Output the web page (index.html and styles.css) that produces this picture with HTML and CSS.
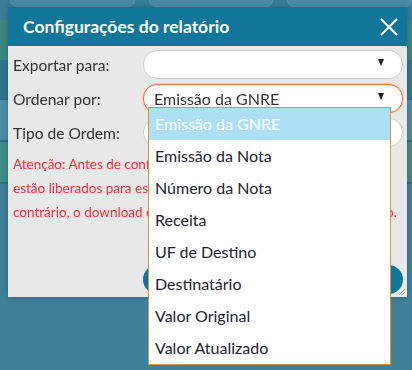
FILE: index.html
```html
<!DOCTYPE html>
<html lang="pt-BR">
<head>
  <meta charset="UTF-8" />
  <meta name="viewport" content="width=device-width, initial-scale=1.0"/>
  <title>Relatório GNRE</title>
  <link rel="stylesheet" href="styles.css">
</head>
<body>
  <!-- Page behind the modal -->
  <div class="page">
    <div class="top-tabs">
      <div class="top-tab"></div>
      <div class="top-tab"></div>
      <div class="top-tab"></div>
    </div>
    <div class="page-band green"></div>
    <div class="page-band dark"></div>
    <div class="page-band line"></div>
    <div class="page-band lighter"></div>
    <div class="page-band line"></div>
    <div class="page-band green2"></div>
    <div class="page-band line"></div>
  </div>

  <!-- Modal -->
  <div class="modal">
    <div class="modal-header">
      <h2>Configurações do relatório</h2>
      <button class="close-btn" aria-label="Fechar">
        <svg width="18" height="18" viewBox="0 0 18 18"><path d="M1 1 L17 17 M17 1 L1 17" stroke="#fff" stroke-width="2" fill="none"/></svg>
      </button>
    </div>
    <div class="modal-body">
      <div class="form-row">
        <label>Exportar para:</label>
        <div class="select-box"><span></span><i class="arrow"></i></div>
      </div>
      <div class="form-row">
        <label>Ordenar por:</label>
        <div class="select-box focused">
          <span>Emissão da GNRE</span><i class="arrow"></i>
          <ul class="dropdown">
            <li class="selected">Emissão da GNRE</li>
            <li>Emissão da Nota</li>
            <li>Número da Nota</li>
            <li>Receita</li>
            <li>UF de Destino</li>
            <li>Destinatário</li>
            <li>Valor Original</li>
            <li>Valor Atualizado</li>
          </ul>
        </div>
      </div>
      <div class="form-row">
        <label>Tipo de Ordem:</label>
        <div class="select-box"><span>Crescente</span><i class="arrow"></i></div>
      </div>
      <p class="warning">Atenção: Antes de confirmar, verifique se os filtros selecionados estão liberados para esse tipo de relatório e exportação. Caso contrário, o download dos dados não será realizado com sucesso.</p>
      <div class="actions">
        <button class="confirm-btn">Gerar Relatório</button>
      </div>
      <svg class="grip" width="8" height="8" viewBox="0 0 8 8"><path d="M7 1 L1 7 M7 4 L4 7" stroke="#b8b8b8" stroke-width="1" fill="none"/></svg>
    </div>
  </div>
</body>
</html>
```
FILE: styles.css
```css
* { box-sizing: border-box; }
body {
  margin: 0;
  font-family: Lato, 'Open Sans', sans-serif;
  background: #3f819b;
  height: 370px;
  overflow: hidden;
}
.page {
  height: 370px;
}
.top-tabs {
  display: flex;
  gap: 14px;
  padding: 0 0 0 10px;
  height: 20px;
  background: #3a7d97;
}
.top-tab {
  width: 143px;
  height: 7px;
  background: #4a8aa6;
  border: 1px solid #5a95ad;
  border-top: none;
  border-radius: 0 0 8px 8px;
}
.page-band { height: 40px; }
.page-band.green { background: #3d8783; }
.page-band.dark { height: 38px; background: #2f7592; }
.page-band.line { height: 2px; background: #2e6f89; }
.page-band.lighter { height: 40px; background: #4b8ca6; }
.page-band.green2 { height: 40px; background: #3f8d87; }

.modal {
  position: fixed;
  top: 7px;
  left: 8px;
  width: 399px;
  height: 290px;
  background: #e8e8e8;
  box-shadow: 0 0 6px rgba(0,0,0,0.25);
}
.modal-header {
  height: 39px;
  background: #11769a;
  display: flex;
  align-items: center;
  justify-content: space-between;
  padding: 0 9px 0 15px;
}
.modal-header h2 {
  margin: 0;
  color: white;
  font-size: 17.5px;
  font-weight: bold;
}
.close-btn {
  background: none;
  border: none;
  padding: 0;
  width: 18px;
  height: 18px;
  cursor: pointer;
}
.modal-body {
  position: relative;
  height: 251px;
  padding: 4px 4px 0 5px;
}
.form-row {
  display: flex;
  align-items: center;
  height: 29px;
  margin-bottom: 5px;
}
.form-row label {
  width: 130px;
  font-size: 15.6px;
  color: #333;
}
.select-box {
  position: relative;
  flex: 1;
  height: 29px;
  background: white;
  border: 1px solid #cdcdcd;
  border-radius: 14px;
  display: flex;
  align-items: center;
  padding: 0 10px;
  font-size: 16px;
  color: #333;
}
.select-box span { flex: 1; }
.select-box.focused {
  border-color: #f46d3b;
  box-shadow: 0 0 2px #f7a07c;
}
.arrow {
  width: 0;
  height: 0;
  border-left: 3.5px solid transparent;
  border-right: 3.5px solid transparent;
  border-top: 7px solid #222;
  margin-right: 8px;
  margin-top: -4px;
}
.dropdown {
  position: absolute;
  top: 22px;
  left: 4px;
  width: 243px;
  margin: 0;
  padding: 0;
  list-style: none;
  background: white;
  border: 1px solid #d09a3c;
  z-index: 5;
}
.dropdown li {
  height: 32px;
  line-height: 31px;
  padding-left: 6px;
  font-size: 16px;
  color: #1e1e2e;
}
.dropdown li.selected {
  background: #aee0f5;
  color: white;
}
.warning {
  margin: 3px 0 0;
  color: #f5303a;
  font-size: 13.5px;
  line-height: 24px;
}
.actions {
  position: absolute;
  left: 135px;
  right: 4px;
  top: 219px;
}
.confirm-btn {
  width: 100%;
  height: 29px;
  border: none;
  border-radius: 15px;
  background: #11769a;
  color: white;
  font-family: inherit;
  font-size: 15px;
  font-weight: bold;
}
.grip {
  position: absolute;
  right: 1px;
  bottom: 1px;
}
```
